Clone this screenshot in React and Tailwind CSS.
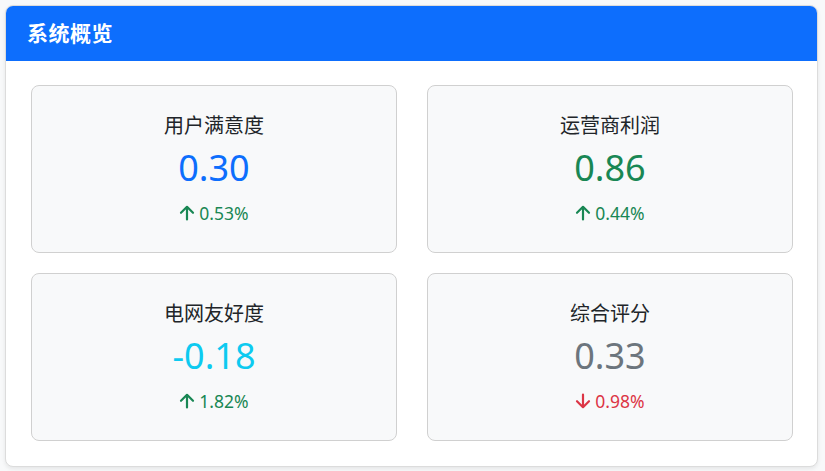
import React from "react";

const items = [
  { title: "用户满意度", value: "0.30", color: "text-[#0d6efd]", up: true, change: "0.53%" },
  { title: "运营商利润", value: "0.86", color: "text-[#198754]", up: true, change: "0.44%" },
  { title: "电网友好度", value: "-0.18", color: "text-[#0dcaf0]", up: true, change: "1.82%" },
  { title: "综合评分", value: "0.33", color: "text-[#6c757d]", up: false, change: "0.98%" },
];

function Arrow({ up }) {
  return (
    <svg width="16" height="16" viewBox="0 0 16 16" fill="none" stroke="currentColor" strokeWidth="2.2" strokeLinecap="round" strokeLinejoin="round" className="mr-[4px]">
      {up ? (
        <path d="M8 14.5V2 M2 7.8 L8 1.8 L14 7.8" />
      ) : (
        <path d="M8 1.5V14 M2 8.2 L8 14.2 L14 8.2" />
      )}
    </svg>
  );
}

export default function App() {
  return (
    <div className="w-[825px] h-[471px] bg-[#f8f9fa] pt-[5px] pl-[5px] pr-[7px]" style={{ fontFamily: '"Noto Sans", "Noto Sans CJK SC", sans-serif' }}>
      <div className="h-[462px] bg-white border border-[#dcdcdc] rounded-[8px] shadow-[0_2px_4px_rgba(0,0,0,0.08)] overflow-hidden flex flex-col">
        <div className="h-[55px] bg-[#0d6efd] flex items-center px-[21px] shrink-0">
          <h1 className="text-white text-[21px] font-bold tracking-[0.5px]">系统概览</h1>
        </div>
        <div className="grid grid-cols-2 gap-x-[30px] gap-y-[20px] pl-[25px] pr-[24px] pt-[24px]">
          {items.map((it) => (
            <div key={it.title} className="h-[168px] bg-[#f8f9fa] border border-[#d0d0d0] rounded-[8px] flex flex-col items-center justify-center">
              <div className="text-[20px] text-[#212529] leading-[28px]">{it.title}</div>
              <div className={`text-[36px] leading-[48px] mt-[4px] ${it.color}`}>{it.value}</div>
              <div className={`flex items-center text-[17.5px] leading-[26px] mt-[8px] ${it.up ? "text-[#198754]" : "text-[#dc3545]"}`}>
                <Arrow up={it.up} />
                <span>{it.change}</span>
              </div>
            </div>
          ))}
        </div>
      </div>
    </div>
  );
}
